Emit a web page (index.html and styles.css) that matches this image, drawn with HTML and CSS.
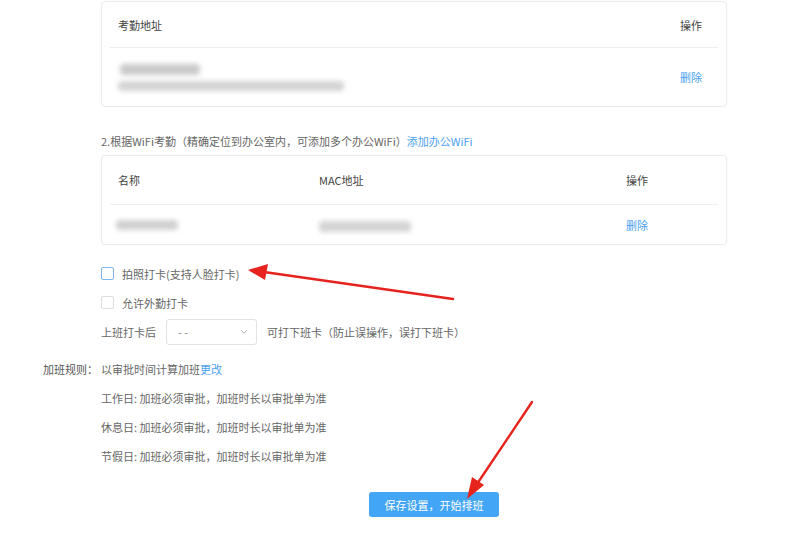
FILE: index.html
```html
<!DOCTYPE html>
<html lang="zh-CN">
<head>
  <meta charset="UTF-8" />
  <title>考勤设置</title>
  <link rel="stylesheet" href="styles.css">
</head>
<body>
  <div class="page">
    <div class="main">
      <!-- 考勤地址 -->
      <div class="card card-address">
        <div class="row head">
          <span class="col-grow">考勤地址</span>
          <span class="col-op">操作</span>
        </div>
        <div class="row body tall">
          <div class="col-grow">
            <div class="blur blur-a"></div>
            <div class="blur blur-b"></div>
          </div>
          <a class="col-op link">删除</a>
        </div>
      </div>

      <p class="section-title">2.根据WiFi考勤（精确定位到办公室内，可添加多个办公WiFi）<a class="link">添加办公WiFi</a></p>

      <!-- WiFi -->
      <div class="card card-wifi">
        <div class="row head">
          <span class="col-name">名称</span>
          <span class="col-mac">MAC地址</span>
          <span class="col-op">操作</span>
        </div>
        <div class="row body">
          <div class="col-name"><div class="blur blur-c"></div></div>
          <div class="col-mac"><div class="blur blur-d"></div></div>
          <a class="col-op link">删除</a>
        </div>
      </div>

      <div class="options">
        <label class="check"><span class="box active"></span>拍照打卡(支持人脸打卡)</label>
        <label class="check"><span class="box"></span>允许外勤打卡</label>
        <div class="select-row">
          <span>上班打卡后</span>
          <div class="select">
            <span>- -</span>
            <svg width="8" height="5" viewBox="0 0 8 5"><path d="M1 1l3 3 3-3" fill="none" stroke="#bbb" stroke-width="1"/></svg>
          </div>
          <span>可打下班卡（防止误操作，误打下班卡）</span>
        </div>
      </div>
    </div>

    <div class="overtime">
      <div class="ot-line first"><span class="ot-label">加班规则：</span>以审批时间计算加班<a class="link">更改</a></div>
      <div class="ot-line">工作日: 加班必须审批，加班时长以审批单为准</div>
      <div class="ot-line">休息日: 加班必须审批，加班时长以审批单为准</div>
      <div class="ot-line">节假日: 加班必须审批，加班时长以审批单为准</div>
    </div>

    <div class="actions">
      <button class="btn-save">保存设置，开始排班</button>
    </div>
  </div>

  <!-- annotation arrows drawn over the screenshot -->
  <svg class="marks" width="787" height="535" viewBox="0 0 787 535">
    <path d="M453 299 L264 272" stroke="#e6231c" stroke-width="2.6" stroke-linecap="round"/>
    <path d="M248 270 L268 264 L265 280 Z" fill="#e6231c"/>
    <path d="M532 402 L477 484" stroke="#e6231c" stroke-width="2.4" stroke-linecap="round"/>
    <path d="M467 499 L472 477 L484 485 Z" fill="#e6231c"/>
  </svg>
</body>
</html>
```

FILE: styles.css
```css
body {
  margin: 0;
  background: #fff;
  font-family: "Noto Sans CJK SC", "Noto Sans", sans-serif;
  font-size: 11px;
  color: #666;
}

.page {
  position: relative;
  width: 787px;
  height: 535px;
  overflow: hidden;
}

.main {
  padding-left: 101px;
  width: 626px;
}

a.link {
  color: #4b9ff0;
  cursor: pointer;
}

/* Tables in cards */
.card {
  border: 1px solid #ececec;
  border-radius: 4px;
  box-shadow: 0 0 2px rgba(0, 0, 0, 0.04);
  padding: 0 8px;
}

.card-address {
  margin-top: 1px;
}

.row {
  display: flex;
  align-items: center;
  padding: 0 8px;
}

.row.head {
  color: #444;
  border-bottom: 1px solid #eee;
}

.card-address .head {
  height: 45px;
}

.card-wifi .head {
  height: 48px;
}

.row.body {
  height: 39px;
}

.row.body.tall {
  height: 58px;
}

.col-grow {
  flex: 1;
}

.col-name {
  width: 201px;
}

.col-mac {
  flex: 1;
}

.card-address .col-op {
  width: 30px;
}

.card-wifi .col-op {
  width: 84px;
}

.blur {
  background: #c9c9c9;
  filter: blur(2.5px);
  border-radius: 4px;
}

.blur-a {
  width: 80px;
  height: 11px;
  margin: 0 0 6px 2px;
}

.blur-b {
  width: 226px;
  height: 10px;
  background: #d4d4d4;
}

.blur-c {
  width: 62px;
  height: 10px;
  margin-left: -2px;
  background: #d0d0d0;
}

.blur-d {
  width: 92px;
  height: 11px;
  margin-top: 4px;
  background: #d4d4d4;
}

.section-title {
  margin: 0;
  height: 48px;
  line-height: 68px;
  color: #666;
}

/* Options */
.options {
  padding-top: 14px;
}

.check {
  display: flex;
  align-items: center;
  height: 29px;
}

.box {
  width: 11px;
  height: 11px;
  border: 1px solid #ddd;
  border-radius: 2px;
  margin-right: 8px;
}

.box.active {
  border-color: #7fb6ee;
}

.select-row {
  display: flex;
  align-items: center;
  height: 29px;
}

.select {
  display: flex;
  align-items: center;
  justify-content: space-between;
  width: 70px;
  height: 24px;
  padding: 0 8px 0 11px;
  margin: 0 10px 0 10px;
  border: 1px solid #e3e3e3;
  border-radius: 3px;
  color: #888;
}

/* Overtime rules */
.overtime {
  padding-top: 9px;
}

.ot-line {
  height: 29px;
  line-height: 29px;
  padding-left: 101px;
}

.ot-line.first {
  padding-left: 43px;
}

.ot-label {
  display: inline-block;
  width: 58px;
  color: #555;
}

.actions {
  display: flex;
  justify-content: center;
  width: 666px;
  padding-left: 101px;
  margin-top: 21px;
}

.btn-save {
  width: 130px;
  height: 25px;
  border: none;
  border-radius: 3px;
  background: #42a5f5;
  color: #fff;
  font-family: inherit;
  font-size: 11px;
}

.marks {
  position: absolute;
  left: 0;
  top: 0;
  pointer-events: none;
}
```
